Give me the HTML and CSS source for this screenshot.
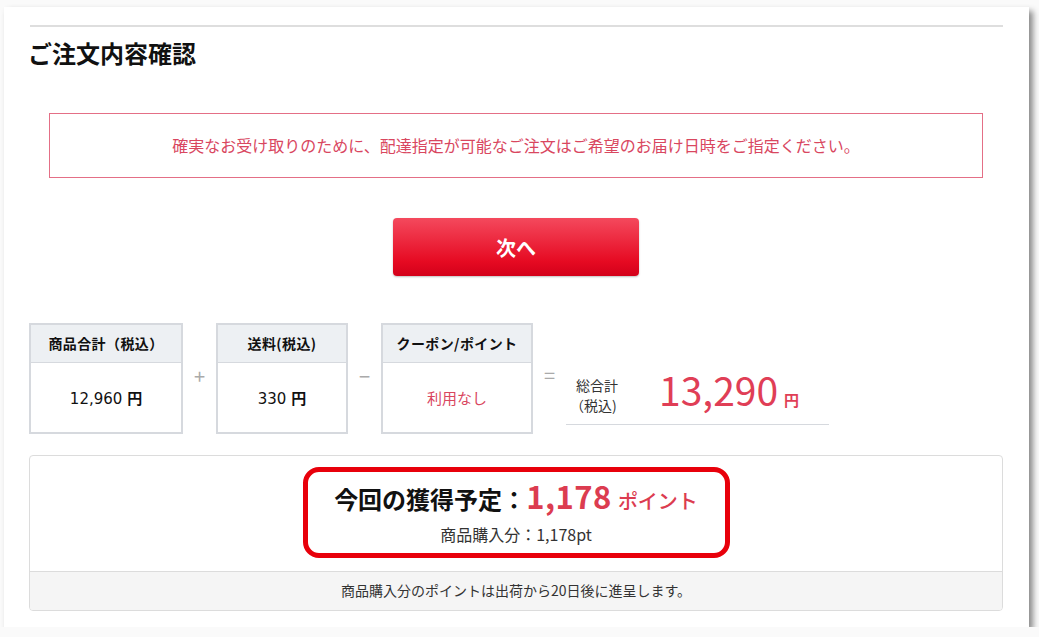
FILE: index.html
```
<!DOCTYPE html>
<html lang="ja">
<head>
<meta charset="utf-8">
<title>ご注文内容確認</title>
<link rel="stylesheet" href="styles.css">
</head>
<body>
	<div class="card">
		<hr class="rule">
		<h1 class="title">ご注文内容確認</h1>
		<p class="notice">確実なお受け取りのために、配達指定が可能なご注文はご希望のお届け日時をご指定ください。</p>
		<div class="actions">
			<button class="next" type="button">次へ</button>
		</div>
		<div class="summary">
			<div class="cell cell-goods">
				<div class="cell-head">商品合計（税込）</div>
				<div class="cell-body">12,960 <b>円</b></div>
			</div>
			<div class="op">+</div>
			<div class="cell cell-ship">
				<div class="cell-head">送料(税込)</div>
				<div class="cell-body">330 <b>円</b></div>
			</div>
			<div class="op">−</div>
			<div class="cell cell-coupon">
				<div class="cell-head">クーポン/ポイント</div>
				<div class="cell-body cell-none">利用なし</div>
			</div>
			<div class="op op-eq">=</div>
			<div class="total">
				<div class="total-label">総合計<br><span class="tax">（税込)</span></div>
				<div class="total-price">13,290<span class="yen">円</span></div>
			</div>
		</div>
		<div class="points">
			<div class="points-main">
				<div class="points-frame">
					<div class="points-title">今回の獲得予定：<span class="points-num">1,178</span><span class="points-unit">ポイント</span></div>
					<div class="points-sub">商品購入分：1,178pt</div>
				</div>
			</div>
			<div class="points-note">商品購入分のポイントは出荷から20日後に進呈します。</div>
		</div>
	</div>
</body>
</html>
```
FILE: styles.css
```
*{
	box-sizing: border-box;
	margin: 0;
	padding: 0;
}
body{
	background: #fafafa;
	color: #222;
	font-family: "Noto Sans CJK JP", "Noto Sans", sans-serif;
}
.card{
	background: #fff;
	box-shadow: 4px 4px 6px rgba(0,0,0,.45);
	height: 620px;
	margin: 7px 0 0 4px;
	padding: 18px 26px 0 25px;
	width: 1025px;
}
.rule{
	border: none;
	border-top: 2px solid #dedede;
	margin-left: 1px;
}
.title{
	color: #111;
	font-size: 24px;
	font-weight: 700;
	line-height: 30px;
	margin: 11px 0 0 -1px;
}
.notice{
	border: 1px solid #e46f86;
	color: #d9475f;
	font-size: 16px;
	height: 65px;
	line-height: 63px;
	margin: 45px 20px 0;
	text-align: center;
}
.actions{
	display: flex;
	justify-content: center;
	margin-top: 40px;
}
.next{
	background: linear-gradient(#f4495d, #e60a22 75%, #d3001a);
	border: none;
	border-radius: 4px;
	box-shadow: 0 1px 2px rgba(0,0,0,.25);
	color: #fff;
	font-family: inherit;
	font-size: 20px;
	font-weight: 700;
	height: 58px;
	width: 246px;
}
.summary{
	align-items: flex-start;
	display: flex;
	margin-top: 47px;
}
.cell{
	border: 2px solid #d6d9de;
	height: 111px;
	text-align: center;
}
.cell-goods{ width: 154px; }
.cell-ship{ width: 132px; }
.cell-coupon{ width: 152px; }
.cell-head{
	background: #edf0f3;
	border-bottom: 1px solid #d6d9de;
	color: #111;
	font-size: 14px;
	font-weight: 700;
	height: 38px;
	letter-spacing: .4px;
	line-height: 36px;
}
.cell-body{
	color: #111;
	font-family: "DejaVu Sans", "Noto Sans CJK JP", sans-serif;
	font-size: 15px;
	line-height: 69px;
}
.cell-body b{
	font-family: "Noto Sans CJK JP", sans-serif;
	font-size: 15px;
}
.cell-none{
	color: #d9475f;
	font-family: "Noto Sans CJK JP", sans-serif;
}
.op{
	color: #aaa;
	font-size: 20px;
	line-height: 20px;
	margin-top: 43px;
	text-align: center;
	width: 33px;
}
.op-eq{
	margin-top: 42px;
}
.total{
	align-items: center;
	border-bottom: 1px solid #d6d9de;
	display: flex;
	height: 102px;
	padding: 42px 0 0 10px;
	width: 263px;
}
.total-label{
	color: #333;
	font-size: 14px;
	line-height: 20px;
	width: 83px;
}
.tax{
	margin-left: -6px;
}
.total-price{
	color: #e03e56;
	font-size: 39px;
	line-height: 40px;
}
.yen{
	font-size: 15px;
	font-weight: 700;
	margin-left: 6px;
}
.points{
	border: 1px solid #dcdcdc;
	border-radius: 4px;
	margin-top: 21px;
	overflow: hidden;
}
.points-main{
	display: flex;
	justify-content: center;
	padding: 11px 0 13px;
}
.points-frame{
	border: 5px solid #e8000b;
	border-radius: 16px;
	height: 91px;
	padding-top: 5px;
	text-align: center;
	width: 427px;
}
.points-title{
	color: #111;
	font-size: 24px;
	font-weight: 700;
	line-height: 38px;
}
.points-num{
	color: #dc3c50;
	font-size: 31px;
	letter-spacing: .5px;
}
.points-unit{
	color: #dc3c50;
	font-size: 20px;
	font-weight: 500;
	margin-left: 6px;
}
.points-sub{
	color: #333;
	font-size: 16px;
	line-height: 24px;
	margin-top: 2px;
}
.points-note{
	background: #f5f5f5;
	border-top: 1px solid #dcdcdc;
	color: #333;
	font-size: 14px;
	height: 39px;
	line-height: 36px;
	text-align: center;
}
```
